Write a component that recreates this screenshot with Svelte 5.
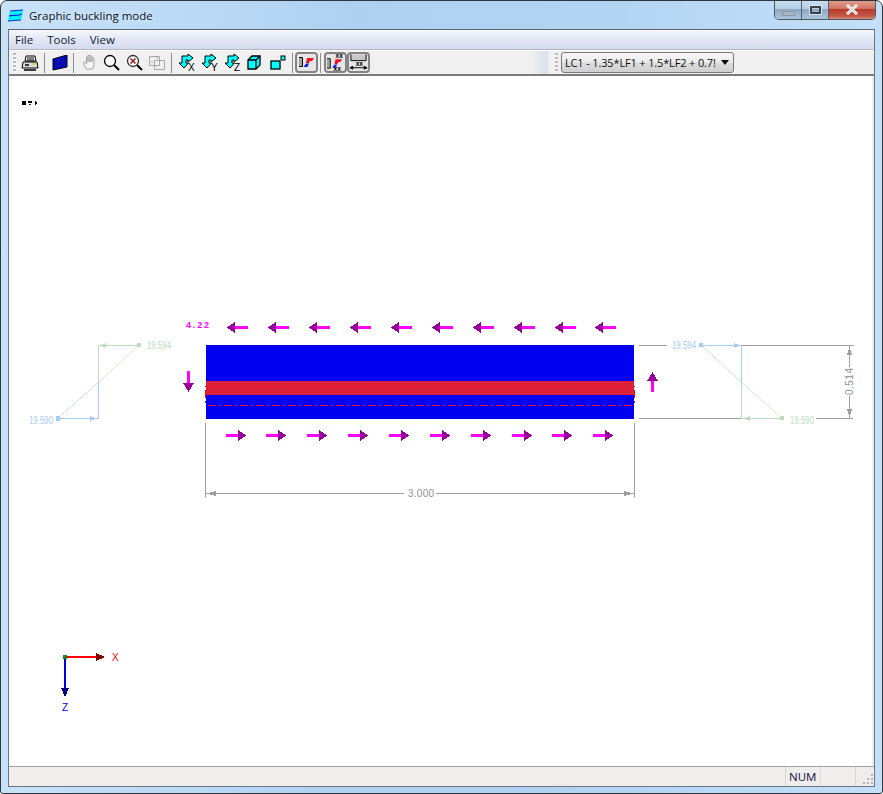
<script>
  const topArrows = [227, 268, 309, 350, 391, 432, 473, 514, 555, 595];
  const bottomArrows = [226, 266, 307, 348, 389, 430, 471, 512, 552, 593];
  const viewIcons = ['X', 'Y', 'Z'];
</script>

<div class="window">
  <header class="title">
    <svg class="app-icon" width="16" height="14" viewBox="0 0 16 14">
      <path d="M2 2 L15 1 L13 11 L0 12 Z" fill="#00f0ff" />
      <path d="M2 2 L15 1 M1 7 C6 5 9 8 14 5 M0 12 L13 11" stroke="#1030d0" stroke-width="1.2" fill="none" />
    </svg>
    <span class="title-text">Graphic buckling mode</span>
    <div class="caption">
      <div class="cap cap-min"><i></i></div>
      <div class="cap cap-max"><i></i></div>
      <div class="cap cap-close">
        <svg width="16" height="11" viewBox="0 0 16 11">
          <path d="M3 1 L13 10 M13 1 L3 10" stroke="#fff" stroke-width="3" />
          <path d="M3 1 L13 10 M13 1 L3 10" stroke="#ddd" stroke-width="1.4" />
        </svg>
      </div>
    </div>
  </header>

  <div class="client">
    <nav class="menu">
      <span>File</span>
      <span>Tools</span>
      <span>View</span>
    </nav>

    <div class="toolbar">
      <div class="grip"></div>
      <div class="tools">
        <svg class="ico wide" width="18" height="16" viewBox="0 0 18 16">
          <path d="M5 1 H14 L15 6 H4 Z" fill="#fff" stroke="#000" />
          <path d="M6 3 H13 M6 5 H13" stroke="#000" />
          <path d="M2 7 H16 L17 13 H1 Z" fill="#ddd" stroke="#000" />
          <path d="M3 15 H15 M4 10 H8" stroke="#000" stroke-width="1.4" />
          <path d="M11 9 H14" stroke="#e8d030" stroke-width="2" />
        </svg>
        <b class="sep"></b>
        <svg class="ico wide" width="16" height="16" viewBox="0 0 16 16">
          <path d="M1 4 L15 0 V12 L1 15 Z" fill="#0000e0" stroke="#000" />
          <path d="M5.5 3 V14 M10.5 2 V13 M1 8 L15 4 M1 12 L15 8" stroke="#102060" />
        </svg>
        <b class="sep"></b>
        <svg class="ico hand" width="16" height="17" viewBox="0 0 16 17">
          <path d="M4 15 L1 9 L2.5 8 L4.5 10 V3 H6 V8 V1.5 H8 V8 V2 H10 V8 V4 H12 V11 L10.5 15 Z" fill="#f4f4f4" stroke="#a8a8a8" />
        </svg>
        <svg class="ico" width="17" height="17" viewBox="0 0 17 17">
          <circle cx="7" cy="7" r="5.5" fill="#fff" stroke="#000" stroke-width="1.3" />
          <path d="M11 11 L16 16" stroke="#000" stroke-width="2" />
        </svg>
        <svg class="ico" width="17" height="17" viewBox="0 0 17 17">
          <circle cx="7" cy="7" r="5.5" fill="#fff" stroke="#303030" stroke-width="1.3" />
          <path d="M4.5 4.5 L9.5 9.5 M9.5 4.5 L4.5 9.5" stroke="#a02020" stroke-width="1.6" />
          <path d="M11 11 L16 16" stroke="#000" stroke-width="2" />
        </svg>
        <svg class="ico" width="16" height="15" viewBox="0 0 16 15">
          <path d="M0.5 1.5 H10.5 V10.5 H0.5 Z M5.5 5.5 H15.5 V14.5 H5.5 Z" fill="none" stroke="#a8a8a8" />
          <path d="M7 3 H9 M3 6 V8" stroke="#a8a8a8" />
        </svg>
        <b class="sep s-view"></b>
        {#each viewIcons as label}
          <svg class="view" width="18" height="19" viewBox="0 0 18 19">
            <path d="M4 3 H10 V1 L15 5 L10 9 V7 H8 V10 H10.5 L6 15 L1 10 H4 Z" fill="#00ffff" stroke="#000" />
            <text x="10" y="17.5" class="axis-letter">{label}</text>
          </svg>
        {/each}
        <svg class="view cube" width="14" height="15" viewBox="0 0 14 15">
          <path d="M1 5 L5 1 H13 V10 L9 14 H1 Z" fill="#00ffff" stroke="#000" stroke-width="1.3" />
          <path d="M1 5 H9 V14 M9 5 L13 1" stroke="#000" stroke-width="1.3" fill="none" />
        </svg>
        <svg class="view boxes" width="16" height="15" viewBox="0 0 16 15">
          <rect x="1" y="6" width="9" height="8" fill="#00ffff" stroke="#000" stroke-width="1.3" />
          <rect x="11" y="1" width="4" height="4" fill="#00ffff" stroke="#000" />
        </svg>
        <b class="sep s-a"></b>
        <div class="tbtn">
          <svg width="18" height="13" viewBox="0 0 18 13">
            <path d="M1 2 H4 V10 H1 Z" fill="#a0a0a0" />
            <path d="M1 1.5 H4.5 V10.5 H1" fill="none" stroke="#000" />
            <path d="M9 2 H16 L14 5 H12 L11 7 H8 Z" fill="#f01020" />
            <path d="M8 7.5 H11 L9.5 11 H5.5 Z" fill="#1020f0" />
          </svg>
        </div>
        <b class="sep s-b"></b>
        <div class="tbtn">
          <svg width="20" height="19" viewBox="0 0 20 19">
            <path d="M1 6 H4 V15 H1 Z" fill="#a0a0a0" />
            <path d="M1 5.5 H4.5 V15.5 H1" fill="none" stroke="#000" />
            <path d="M10 6 H17 L15 9 H13 L12 11 H9 Z" fill="#f01020" />
            <path d="M9 11.5 H12 L10 15 H6.5 Z" fill="#1020f0" />
            <text x="10" y="4.5" class="xx">xx</text>
            <text x="8" y="18.5" class="xx">xx</text>
          </svg>
        </div>
        <div class="tbtn">
          <svg width="20" height="17" viewBox="0 0 20 17">
            <path d="M2 0 H18 V6 H2 Z" fill="#c8c8c8" />
            <path d="M2 0 V6.5 H18 V0" fill="none" stroke="#000" />
            <text x="7" y="12" class="xx">xx</text>
            <path d="M1 14 H19 M1 14 L4 12.5 V15.5 Z M19 14 L16 12.5 V15.5 Z" stroke="#000" />
          </svg>
        </div>
      </div>
      <div class="tail"></div>
      <div class="grip g2"></div>
      <div class="combo">
        <span>LC1 - 1.35*LF1 + 1.5*LF2 + 0.7!</span>
        <i class="caret"></i>
      </div>
    </div>

    <main class="canvas">
      <svg class="plot" viewBox="9 76 864 691" width="864" height="691" shape-rendering="crispEdges">
        <!-- small scale marks -->
        <rect x="22" y="101" width="4" height="4" fill="#000" />
        <rect x="28" y="101" width="4" height="2" fill="#000" />
        <rect x="29" y="104" width="2" height="1" fill="#222" />
        <path d="M35 101 L38 103 L35 105 Z" fill="#000" />

        <!-- section -->
        <rect x="206" y="345" width="428" height="74" fill="#0000f0" />
        <rect x="206" y="381" width="428" height="14" fill="#dc2038" />
        <path d="M206 386.5 H634" stroke="#f01030" stroke-dasharray="6 3" />
        <path d="M208 405.5 H634" stroke="#f01030" stroke-dasharray="8 3 2 3" />
        <rect x="205" y="390" width="1" height="8" fill="#ff0000" />
        <rect x="634" y="390" width="1" height="8" fill="#ff0000" />
        <rect x="205" y="386" width="1" height="1" fill="#ff0000" />
        <rect x="634" y="386" width="1" height="1" fill="#ff0000" />
        <rect x="205" y="401" width="1" height="2" fill="#ff0000" />
        <rect x="634" y="401" width="1" height="2" fill="#ff0000" />

        <!-- shear arrows -->
        {#each topArrows as x}
          <rect x={x + 7} y="326" width="14" height="3" fill="#ff00ff" />
          <path d={`M${x} 327.5 L${x + 8} 322 V333 Z`} fill="#990099" />
        {/each}
        {#each bottomArrows as x}
          <rect {x} y="434" width="14" height="3" fill="#ff00ff" />
          <path d={`M${x + 20} 435.5 L${x + 12} 430 V441 Z`} fill="#990099" />
        {/each}
        <rect x="187" y="371" width="3" height="13" fill="#ff00ff" />
        <path d="M188.5 392 L183 383 H194 Z" fill="#990099" />
        <rect x="651" y="379" width="3" height="13" fill="#ff00ff" />
        <path d="M652.5 372 L647 381 H658 Z" fill="#990099" />
        <text x="186" y="328" class="load" textLength="23" lengthAdjust="spacing">4.22</text>

        <!-- left stress diagram -->
        <g shape-rendering="auto">
          <path d="M58 418 L99 382" stroke="#a8ccf0" stroke-dasharray="2 1" />
          <path d="M99 382 L139 345" stroke="#c0dcc0" stroke-dasharray="2 1" />
          <path d="M701 345 L741 382" stroke="#a8ccf0" stroke-dasharray="2 1" />
          <path d="M741 382 L782 418" stroke="#c0dcc0" stroke-dasharray="2 1" />
        </g>
        <path d="M58 418.5 H98.5 V382" stroke="#a8ccf0" fill="none" />
        <path d="M98.5 382 V345.5 H139" stroke="#c0dcc0" fill="none" />
        <rect x="56" y="416" width="4" height="5" fill="#a8ccf0" />
        <rect x="137" y="343" width="4" height="4" fill="#c0dcc0" />
        <path d="M97 418.5 L90 416 V421 Z" fill="#a8ccf0" />
        <path d="M100 345.5 L106 343 V348 Z" fill="#c0dcc0" />
        <text x="147" y="349" class="dim green" textLength="24" lengthAdjust="spacingAndGlyphs">19.594</text>
        <text x="29" y="424" class="dim blue" textLength="24" lengthAdjust="spacingAndGlyphs">19.590</text>

        <!-- right stress diagram -->
        <path d="M701 345.5 H741.5 V382" stroke="#a8ccf0" fill="none" />
        <path d="M741.5 382 V418.5 H782" stroke="#c0dcc0" fill="none" />
        <rect x="699" y="343" width="4" height="4" fill="#a8ccf0" />
        <rect x="780" y="416" width="4" height="4" fill="#c0dcc0" />
        <path d="M741 345.5 L734 343 V348 Z" fill="#a8ccf0" />
        <path d="M744 418.5 L750 416 V421 Z" fill="#c0dcc0" />
        <text x="672" y="349" class="dim blue" textLength="24" lengthAdjust="spacingAndGlyphs">19.594</text>
        <text x="790" y="424" class="dim green" textLength="24" lengthAdjust="spacingAndGlyphs">19.590</text>

        <!-- dimensions -->
        <path d="M639 345.5 H667 M742 345.5 H854 M639 418.5 H741 M816 418.5 H853" stroke="#a0a0a0" fill="none" />
        <path d="M849.5 346 V367 M849.5 396 V418" stroke="#a0a0a0" fill="none" />
        <path d="M849.5 347 L847 355 H852 Z M849.5 417 L847 409 H852 Z" fill="#a0a0a0" />
        <text x="0" y="0" transform="translate(853 395) rotate(-90)" class="dim gray" textLength="27">0.514</text>
        <path d="M205.5 423 V498 M634.5 423 V498" stroke="#a0a0a0" fill="none" />
        <path d="M205 493.5 H404 M436 493.5 H634" stroke="#a0a0a0" fill="none" />
        <path d="M206 493.5 L216 491 V496 Z M634 493.5 L624 491 V496 Z" fill="#a0a0a0" />
        <text x="408" y="497" class="dim gray" textLength="26">3.000</text>

        <!-- axes -->
        <rect x="65" y="656" width="32" height="2" fill="#ff0000" />
        <path d="M105 657 L96 653 V661 Z" fill="#800000" />
        <rect x="64" y="658" width="2" height="32" fill="#0000e0" />
        <path d="M65 697 L61 688 H69 Z" fill="#000080" />
        <rect x="63" y="655" width="4" height="4" fill="#109010" />
        <text x="112" y="661" class="axis red">X</text>
        <text x="62" y="711" class="axis navy">Z</text>
      </svg>
    </main>

    <footer class="status">
      <div class="pane main"></div>
      <div class="pane num">NUM</div>
      <div class="pane p3"></div>
      <div class="pane p4"></div>
      <svg class="resize" width="12" height="12" viewBox="0 0 12 12">
        <path d="M9 1 h2 v2 h-2 Z M5 5 h2 v2 h-2 Z M9 5 h2 v2 h-2 Z M1 9 h2 v2 h-2 Z M5 9 h2 v2 h-2 Z M9 9 h2 v2 h-2 Z" fill="#b4b4b4" />
      </svg>
    </footer>
  </div>
</div>

<style>
  :global(body) {
    margin: 0;
    background: #fff;
  }

  .window {
    width: 883px;
    height: 794px;
    box-sizing: border-box;
    display: flex;
    flex-direction: column;
    padding: 0 7px 6px 8px;
    border: 1px solid #30343c;
    border-radius: 7px 7px 3px 3px;
    background: linear-gradient(90deg, #c8e2f8 0%, #aed1f2 40%, #b2d4f3 70%, #c4e0f8 100%);
    font-family: "Open Sans", "Noto Sans", sans-serif;
    overflow: hidden;
  }

  .title {
    height: 28px;
    flex: none;
    margin-left: -1px;
    display: flex;
    align-items: flex-start;
  }

  .app-icon {
    margin: 8px 5px 0 0;
  }

  .title-text {
    margin-top: 7px;
    font-size: 11.5px;
    line-height: 16px;
    color: #10121c;
    text-shadow: 0 0 6px #e8f4ff;
  }

  .caption {
    margin-left: auto;
    margin-right: -1px;
    margin-top: -1px;
    display: flex;
    height: 20px;
    border: 1px solid #50585f;
    border-top: 0;
    border-radius: 0 0 5px 5px;
    overflow: hidden;
    box-sizing: border-box;
  }

  .cap {
    display: flex;
    align-items: center;
    justify-content: center;
    height: 19px;
    box-sizing: border-box;
    background: linear-gradient(#c6dff2 0%, #b4cfe6 45%, #8ea8bf 50%, #a8c5dc 100%);
  }

  .cap-min {
    width: 27px;
    border-right: 1px solid #56606a;
  }

  .cap-min i {
    width: 11px;
    height: 3px;
    margin-top: 8px;
    background: #a8b6c2;
    border: 1px solid #8a9aa8;
  }

  .cap-max {
    width: 27px;
    border-right: 1px solid #56606a;
  }

  .cap-max i {
    width: 7px;
    height: 4px;
    border: 2px solid #39424b;
    outline: 1px solid #d8e6f0;
  }

  .cap-close {
    width: 46px;
    background: linear-gradient(#e0a08e 0%, #d27563 45%, #b93a28 50%, #c45a48 85%, #d88a78 100%);
  }

  .client {
    flex: 1;
    min-height: 0;
    margin-left: -1px;
    display: flex;
    flex-direction: column;
    border: 1px solid #6e7480;
    border-top-color: #5f6672;
    background: #f0f0f0;
  }

  .menu {
    height: 19px;
    flex: none;
    display: flex;
    align-items: center;
    padding-left: 6px;
    gap: 14px;
    font-size: 11.5px;
    color: #101830;
    background: linear-gradient(#f6f8fc 0%, #e6eaf6 40%, #d4daee 100%);
    border-bottom: 1px solid #b4b8c4;
  }

  .toolbar {
    height: 26px;
    flex: none;
    display: flex;
    align-items: center;
    background: #f0f0f0;
    border-top: 1px solid #fff;
    border-bottom: 2px solid #7c7c7c;
    box-sizing: border-box;
  }

  .grip {
    width: 3px;
    height: 20px;
    margin-left: 4px;
    flex: none;
    background: repeating-linear-gradient(#b8bcc8 0 2px, #f4f4f4 2px 4px);
  }

  .tools {
    display: flex;
    align-items: center;
    margin-left: 5px;
    width: 358px;
    flex: none;
    height: 100%;
  }

  .ico {
    flex: none;
    margin-right: 6px;
  }

  .ico.wide {
    margin-right: 5px;
  }

  .ico.hand {
    margin-left: 1px;
    margin-right: 5px;
  }

  .sep {
    width: 1px;
    height: 20px;
    flex: none;
    background: #8c8c8c;
    margin-right: 7px;
  }

  .s-view {
    margin-right: 6px;
  }

  .s-a {
    margin: 0 2px 0 6px;
  }

  .s-b {
    margin: 0 3px 0 2px;
  }

  .view {
    flex: none;
    margin-right: 5px;
  }

  .cube {
    margin-right: 9px;
  }

  .boxes {
    margin-right: 0;
  }

  .axis-letter {
    font-family: "Liberation Sans", sans-serif;
    font-size: 10px;
    fill: #000;
  }

  .tbtn {
    width: 23px;
    height: 21px;
    flex: none;
    box-sizing: border-box;
    display: flex;
    align-items: center;
    justify-content: center;
    border: 2px solid #848484;
    border-radius: 4px;
    background: #e6e6e6;
  }

  .xx {
    font-family: "Liberation Sans", sans-serif;
    font-size: 7px;
    font-weight: 700;
    fill: #000;
  }

  .tail {
    flex: 1;
    align-self: stretch;
    background: linear-gradient(90deg, #f0f0f0 0, #f0f0f0 90%, #d8deee 100%);
  }

  .g2 {
    margin-left: 7px;
    margin-right: 3px;
  }

  .combo {
    width: 173px;
    height: 21px;
    flex: none;
    box-sizing: border-box;
    margin-right: 140px;
    display: flex;
    align-items: center;
    justify-content: space-between;
    padding: 0 4px 0 3px;
    border: 1px solid #7a7a7a;
    border-radius: 3px;
    background: linear-gradient(#f6f6f6 0%, #ececec 48%, #dcdcdc 52%, #d0d0d0 100%);
    font-family: "Open Sans", "Noto Sans", sans-serif;
    font-size: 11px;
    letter-spacing: -0.15px;
    color: #101010;
    white-space: nowrap;
  }

  .caret {
    width: 0;
    height: 0;
    border-left: 4px solid transparent;
    border-right: 4px solid transparent;
    border-top: 5px solid #000;
  }

  .canvas {
    position: relative;
    flex: 1;
    min-height: 0;
    background: #fff;
    border-right: 2px solid #e8eef4;
    overflow: hidden;
  }

  .plot {
    display: block;
  }

  .load {
    font-family: "Liberation Sans", sans-serif;
    font-size: 9px;
    font-weight: 700;
    fill: #ff00ff;
  }

  .dim {
    font-family: "Liberation Sans", sans-serif;
    font-size: 10px;
    font-weight: 400;
  }

  .green {
    fill: #c0dcc0;
  }

  .blue {
    fill: #a8ccf0;
  }

  .gray {
    fill: #909090;
  }

  .axis {
    font-family: "Liberation Sans", sans-serif;
    font-size: 10px;
  }

  .red {
    fill: #ff0000;
  }

  .navy {
    fill: #0000ff;
  }

  .status {
    height: 19px;
    flex: none;
    display: flex;
    background: #f0eded;
    border-top: 1px solid #a0a0a0;
    font-size: 11.5px;
    color: #101040;
  }

  .pane {
    box-sizing: border-box;
    height: 100%;
    border-right: 1px solid #d8d8d8;
  }

  .main {
    width: 777px;
  }

  .num {
    width: 35px;
    padding-left: 3px;
    line-height: 19px;
  }

  .p3 {
    width: 35px;
  }

  .p4 {
    flex: 1;
    border-right: 0;
  }

  .resize {
    align-self: flex-end;
    flex: none;
    margin-bottom: 1px;
  }
</style>
